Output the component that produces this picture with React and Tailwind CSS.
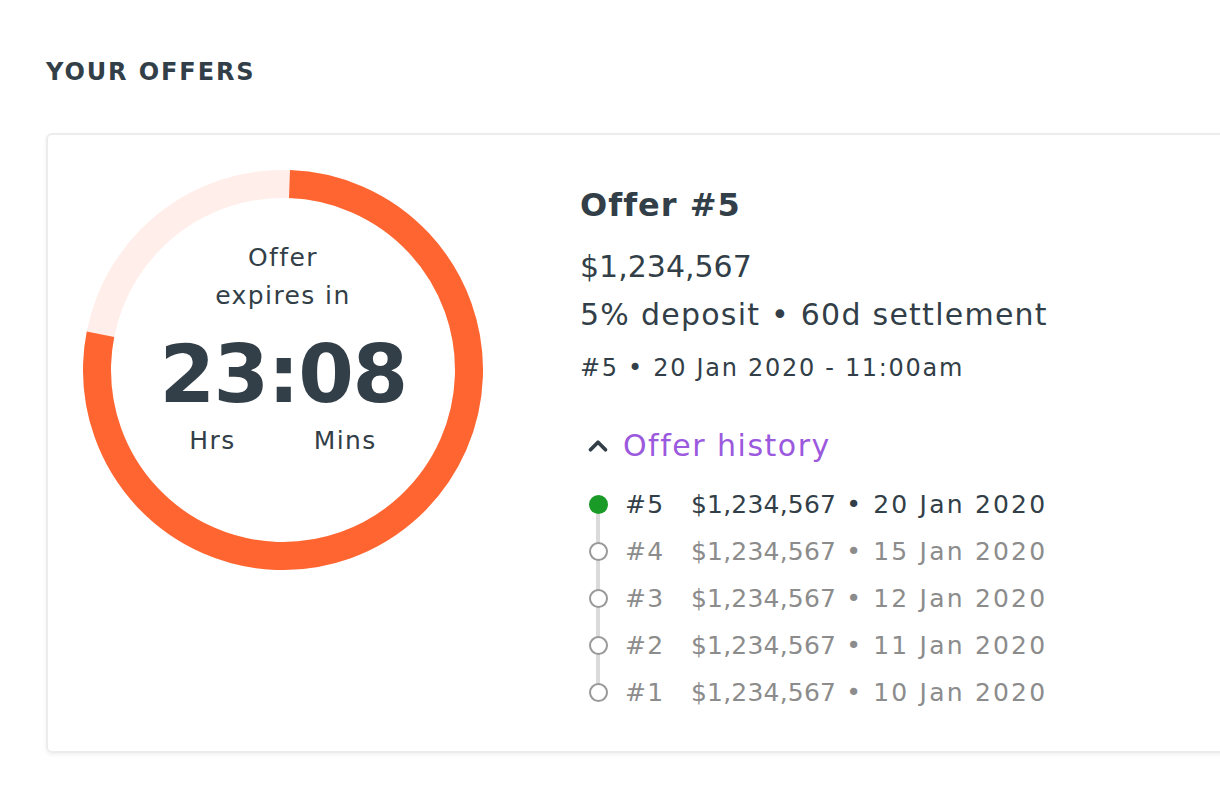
import React from 'react';
import { ChevronUp } from 'lucide-react';

const history = [
    { id: 5, amount: '$1,234,567', date: '20 Jan 2020', current: true },
    { id: 4, amount: '$1,234,567', date: '15 Jan 2020' },
    { id: 3, amount: '$1,234,567', date: '12 Jan 2020' },
    { id: 2, amount: '$1,234,567', date: '11 Jan 2020' },
    { id: 1, amount: '$1,234,567', date: '10 Jan 2020' },
];

function Countdown() {
    const r = 186;
    const c = 2 * Math.PI * r;
    const progress = 0.775;

    return (
        <div className="relative w-[400px] h-[400px] shrink-0">
            <svg className="absolute inset-0" width="400" height="400" viewBox="0 0 400 400">
                <circle cx="200" cy="200" r={r} fill="none" stroke="#ffeee9" strokeWidth="28" />
                <circle
                    cx="200"
                    cy="200"
                    r={r}
                    fill="none"
                    stroke="#ff6531"
                    strokeWidth="28"
                    strokeDasharray={`${c * progress} ${c}`}
                    transform="rotate(-88 200 200)"
                />
            </svg>
            <div className="relative flex flex-col items-center pt-[69px] text-[#333f48] tracking-[1.4px]">
                <div className="text-[25px] leading-[38px]">Offer</div>
                <div className="text-[25px] leading-[38px]">expires in</div>
                <div className="mt-[20px] text-[80px] leading-[80px] font-bold tracking-[-1.5px]">23:08</div>
                <div className="mt-[10px] flex gap-[78px] text-[25px] leading-[32px]">
                    <span>Hrs</span>
                    <span>Mins</span>
                </div>
            </div>
        </div>
    );
}

export default function App() {
    return (
        <div className="min-h-screen bg-white pl-[46px] pt-[56px] font-['DejaVu_Sans',sans-serif] text-[#333f48] overflow-hidden">
            <h2 className="text-[24px] leading-[32px] font-bold tracking-[1.9px] uppercase">Your Offers</h2>

            <div className="mt-[45px] w-[1240px] border-2 border-[#ececec] rounded-md shadow-[0_2px_4px_rgba(0,0,0,0.06)] p-[35px] flex gap-[97px]">
                <Countdown />

                <div className="flex flex-col">
                    <div className="mt-[15px] text-[32px] leading-[40px] font-bold tracking-[1px]">Offer #5</div>
                    <div className="mt-[18px] text-[30px] leading-[48px]">$1,234,567</div>
                    <div className="text-[30px] leading-[48px] tracking-[1.25px]">5% deposit • 60d settlement</div>
                    <div className="mt-[13px] text-[24px] leading-[32px] tracking-[1.7px]">#5 • 20 Jan 2020 - 11:00am</div>

                    <div className="mt-[42px] flex items-center h-[40px]">
                        <ChevronUp size={30} strokeWidth={3} className="ml-[3px] text-[#333f48]" />
                        <span className="ml-[10px] text-[30px] leading-[40px] text-[#9b59de] tracking-[1.5px]">Offer history</span>
                    </div>

                    <div className="mt-[15px] flex flex-col">
                        {history.map((h, i) => (
                            <div key={h.id} className={`flex items-center h-[47px] text-[25px] ${h.current ? 'text-[#333f48]' : 'text-[#8c8c8c]'}`}>
                                <div className="relative w-[36px] h-full flex items-center justify-center">
                                    {i < history.length - 1 && (
                                        <div className="absolute left-[16px] top-1/2 w-[4px] h-full bg-[#dadada]" />
                                    )}
                                    {h.current ? (
                                        <div className="relative w-[19px] h-[19px] rounded-full bg-[#1a9a27]" />
                                    ) : (
                                        <div className="relative w-[19px] h-[19px] rounded-full bg-white border-2 border-[#999999]" />
                                    )}
                                </div>
                                <span className="ml-[9px] w-[66px] tracking-[1.25px]">#{h.id}</span>
                                <span className="tracking-[0.2px]">{h.amount}</span>
                                <span className="ml-[10px] tracking-[2.2px]">• {h.date}</span>
                            </div>
                        ))}
                    </div>
                </div>
            </div>
        </div>
    );
}
